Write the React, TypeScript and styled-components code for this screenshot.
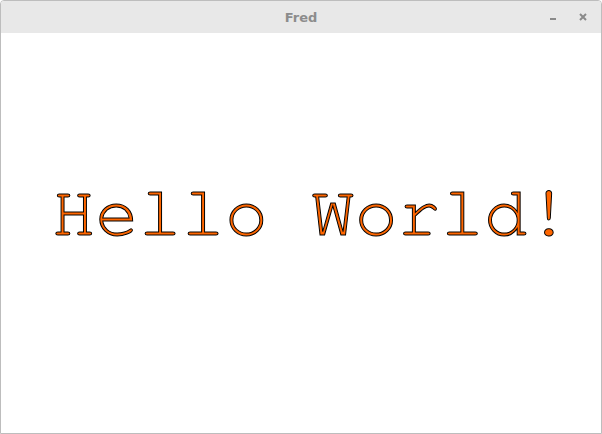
import React from "react";
import styled, { createGlobalStyle } from "styled-components";

const Global = createGlobalStyle`
  html, body { margin: 0; padding: 0; background: #ffffff; }
  #root { width: 602px; height: 434px; }
`;

const Window = styled.div`
  box-sizing: border-box;
  width: 602px;
  height: 434px;
  display: flex;
  flex-direction: column;
  border: 1px solid #bdbdbd;
  border-radius: 4px 4px 0 0;
  overflow: hidden;
  background: #ffffff;
`;

const TitleBar = styled.div`
  height: 32px;
  flex: none;
  display: grid;
  grid-template-columns: 1fr auto 1fr;
  align-items: center;
  background: #e8e8e8;
  font-family: "DejaVu Sans", "Liberation Sans", sans-serif;
`;

const Title = styled.div`
  grid-column: 2;
  font-size: 13px;
  font-weight: bold;
  color: #8c8c8c;
  padding-top: 1px;
`;

const Controls = styled.div`
  grid-column: 3;
  justify-self: end;
  display: flex;
  align-items: center;
  gap: 18px;
  padding-right: 12px;
`;

const ControlButton = styled.span`
  width: 12px;
  height: 12px;
  display: flex;
  align-items: center;
  justify-content: center;
  color: #8a8a8a;
`;

const Content = styled.div`
  flex: 1;
  display: flex;
  justify-content: flex-start;
  padding-top: 144px;
  padding-left: 51px;
`;

const Greeting = styled.div`
  font-family: "Nimbus Mono PS", "Nimbus Mono L", "FreeMono", "Courier 10 Pitch", "Courier", "Liberation Mono", monospace;
  font-size: 72px;
  line-height: 72px;
  color: #ff6600;
  -webkit-text-stroke: 1px #000000;
  white-space: pre;
`;

export default function App() {
  return (
    <>
      <Global />
      <Window>
        <TitleBar>
          <Title>Fred</Title>
          <Controls>
            <ControlButton>
              <svg width="8" height="8" viewBox="0 0 8 8">
                <rect x="1" y="5" width="6" height="2" fill="#8a8a8a" />
              </svg>
            </ControlButton>
            <ControlButton>
              <svg width="8" height="8" viewBox="0 0 8 8">
                <path d="M1 1 L7 7 M7 1 L1 7" stroke="#8a8a8a" strokeWidth="2" />
              </svg>
            </ControlButton>
          </Controls>
        </TitleBar>
        <Content>
          <Greeting>Hello World!</Greeting>
        </Content>
      </Window>
    </>
  );
}
